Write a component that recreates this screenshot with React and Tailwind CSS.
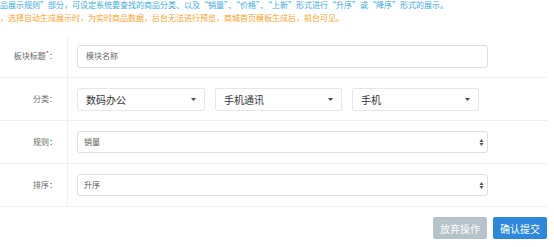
import React from "react";

const FONT = { fontFamily: '"Noto Sans CJK SC", "Noto Sans", sans-serif' };

const Caret = () => (
  <svg width="5" height="3" viewBox="0 0 5 3" className="shrink-0">
    <path d="M0 0h5L2.5 3z" fill="#444" />
  </svg>
);

const UpDown = () => (
  <svg width="5" height="9" viewBox="0 0 5 9" className="shrink-0">
    <path d="M0.5 4L2.5 1L4.5 4z" fill="#555" />
    <path d="M0.5 5L2.5 8L4.5 5z" fill="#555" />
  </svg>
);

const Row = ({ label, required, children }) => (
  <div className="flex h-[43px] w-[548px] border-b border-[#f0f0f0]">
    <div className="w-[68px] shrink-0 border-r border-[#f0f0f0] flex items-center justify-end pr-[10px] text-[8px] text-[#666]">
      {label}
      {required && <span className="text-[#e53935] text-[7px] -mt-[6px]">*</span>}
      <span>：</span>
    </div>
    <div className="flex-1 flex items-center pl-[9px]">{children}</div>
  </div>
);

const Dropdown = ({ value, w }) => (
  <div className={`${w} h-[23px] border border-[#e6e6e6] rounded-[2px] bg-white flex items-center justify-between pl-[8px] pr-[8px] text-[10px] text-[#333]`}>
    <span>{value}</span>
    <Caret />
  </div>
);

const NativeSelect = ({ value }) => (
  <div className="w-[411px] h-[22px] border border-[#dedede] rounded-[3px] bg-white flex items-center justify-between pl-[6px] pr-[3px] text-[8px] text-[#555]">
    <span>{value}</span>
    <UpDown />
  </div>
);

export default function App() {
  return (
    <div className="w-[554px] h-[247px] bg-white overflow-hidden" style={FONT}>
      <div className="-mt-[2px] text-[8px] leading-[13px]">
        <div className="text-[#3ea8de] whitespace-nowrap">品展示规则”部分，可设定系统要查找的商品分类、以及“销量”、“价格”、“上新”形式进行“升序”或“降序”形式的展示。</div>
        <div className="text-[#f7a32c] whitespace-nowrap">，选择自动生成展示时，为实时商品数据，后台无法进行预览，商城首页模板生成后，前台可见。</div>
      </div>

      <div className="mt-[11px]">
        <Row label="板块标题" required>
          <div className="w-[411px] h-[23px] border border-[#dedede] rounded-[3px] flex items-center pl-[8px] text-[8px] text-[#666]">
            模块名称
          </div>
        </Row>
        <Row label="分类">
          <div className="flex gap-[10px]">
            <Dropdown value="数码办公" w="w-[128px]" />
            <Dropdown value="手机通讯" w="w-[127px]" />
            <Dropdown value="手机" w="w-[127px]" />
          </div>
        </Row>
        <Row label="规则">
          <NativeSelect value="销量" />
        </Row>
        <Row label="排序">
          <NativeSelect value="升序" />
        </Row>
      </div>

      <div className="flex justify-end gap-[6px] pr-[7px] mt-[10px]">
        <button className="w-[54px] h-[22px] rounded-[2px] bg-[#b6c2ca] text-white text-[10px]">放弃操作</button>
        <button className="w-[54px] h-[22px] rounded-[2px] bg-[#2d88dc] text-white text-[10px]">确认提交</button>
      </div>
    </div>
  );
}
